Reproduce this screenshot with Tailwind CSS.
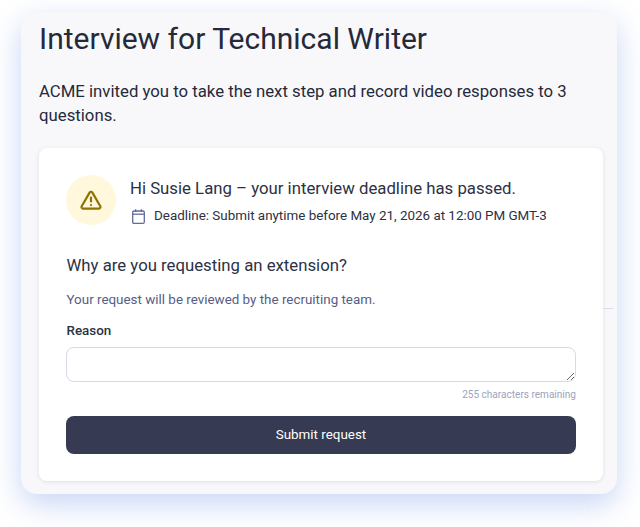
<!DOCTYPE html>
<html lang="en">
<head>
  <meta charset="UTF-8" />
  <title>Interview for Technical Writer</title>
  <script src="https://cdn.jsdelivr.net/npm/@tailwindcss/browser@4"></script>
</head>
<body class="bg-white font-['Roboto',sans-serif] h-[527px] overflow-hidden">
  <div class="pt-3 pl-[21px]">
    <!-- Panel -->
    <div class="relative w-[596px] h-[482px] rounded-[16px] bg-[#f8f8fb] shadow-[0_10px_30px_rgba(80,125,220,0.32)] pl-[18px] pr-[14px]">
      <h1 class="pt-[8px] text-[30px] leading-[38px] text-[#252a3a]">Interview for Technical Writer</h1>
      <p class="mt-[21px] text-[16.75px] leading-[24px] text-[#252a3a] w-[540px]">ACME invited you to take the next step and record video responses to 3 questions.</p>

      <!-- Card -->
      <div class="mt-[21px] bg-white rounded-[8px] shadow-[0_1px_4px_rgba(40,40,80,0.12)] h-[333px] pt-[26px] px-[27px]">
        <div class="flex items-center gap-[14px]">
          <div class="w-[50px] h-[50px] rounded-full bg-[#fff8dc] flex items-center justify-center">
            <svg width="24" height="24" viewBox="0 0 24 24" fill="none" stroke="#8f7200" stroke-width="2.2" stroke-linejoin="round" stroke-linecap="round">
              <path d="M10.6 4.6 a1.6 1.6 0 0 1 2.8 0 L21.3 18.2 a1.6 1.6 0 0 1 -1.4 2.4 H4.1 a1.6 1.6 0 0 1 -1.4 -2.4 Z" />
              <path d="M12 9.5 V13.5" />
              <path d="M12 17 V17.1" />
            </svg>
          </div>
          <div class="pt-[3px]">
            <div class="text-[16.75px] leading-[22px] text-[#2c3144]">Hi Susie Lang – your interview deadline has passed.</div>
            <div class="mt-[8px] flex items-center gap-[9px] pl-[2px]">
              <svg width="13" height="15" viewBox="0 0 13 15" fill="none" stroke="#626b9c" stroke-width="1.3">
                <rect x="0.7" y="2" width="11.6" height="12.3" rx="1.2" />
                <path d="M0.7 5.2 H12.3" />
                <path d="M3.6 0.3 V3 M9.4 0.3 V3" />
              </svg>
              <span class="text-[13.4px] leading-[18px] text-[#2c3144]">Deadline: Submit anytime before May 21, 2026 at 12:00 PM GMT-3</span>
            </div>
          </div>
        </div>

        <h2 class="mt-[28px] pl-[0.5px] text-[16.75px] leading-[24px] text-[#2c3144]">Why are you requesting an extension?</h2>
        <p class="mt-[13px] pl-[0.5px] text-[13.4px] leading-[20px] text-[#565d85]">Your request will be reviewed by the recruiting team.</p>

        <label class="block mt-[12px] pl-[0.5px] text-[13.4px] leading-[18px] font-medium text-[#2c3144]">Reason</label>
        <textarea class="block mt-[7px] w-full h-[35px] rounded-[8px] border border-[#d8d8e6] bg-white"></textarea>
        <div class="mt-[6px] text-right text-[10.05px] leading-[14px] text-[#9ca3bd]">255 characters remaining</div>

        <button class="mt-[14px] w-full h-[38px] rounded-[8px] bg-[#363a52] text-white text-[13.4px]">Submit request</button>
      </div>

      <!-- stray hairline right of the card -->
      <div class="absolute left-[582px] top-[296px] w-[10px] h-px bg-[#dcdce4]"></div>
    </div>
  </div>
</body>
</html>
